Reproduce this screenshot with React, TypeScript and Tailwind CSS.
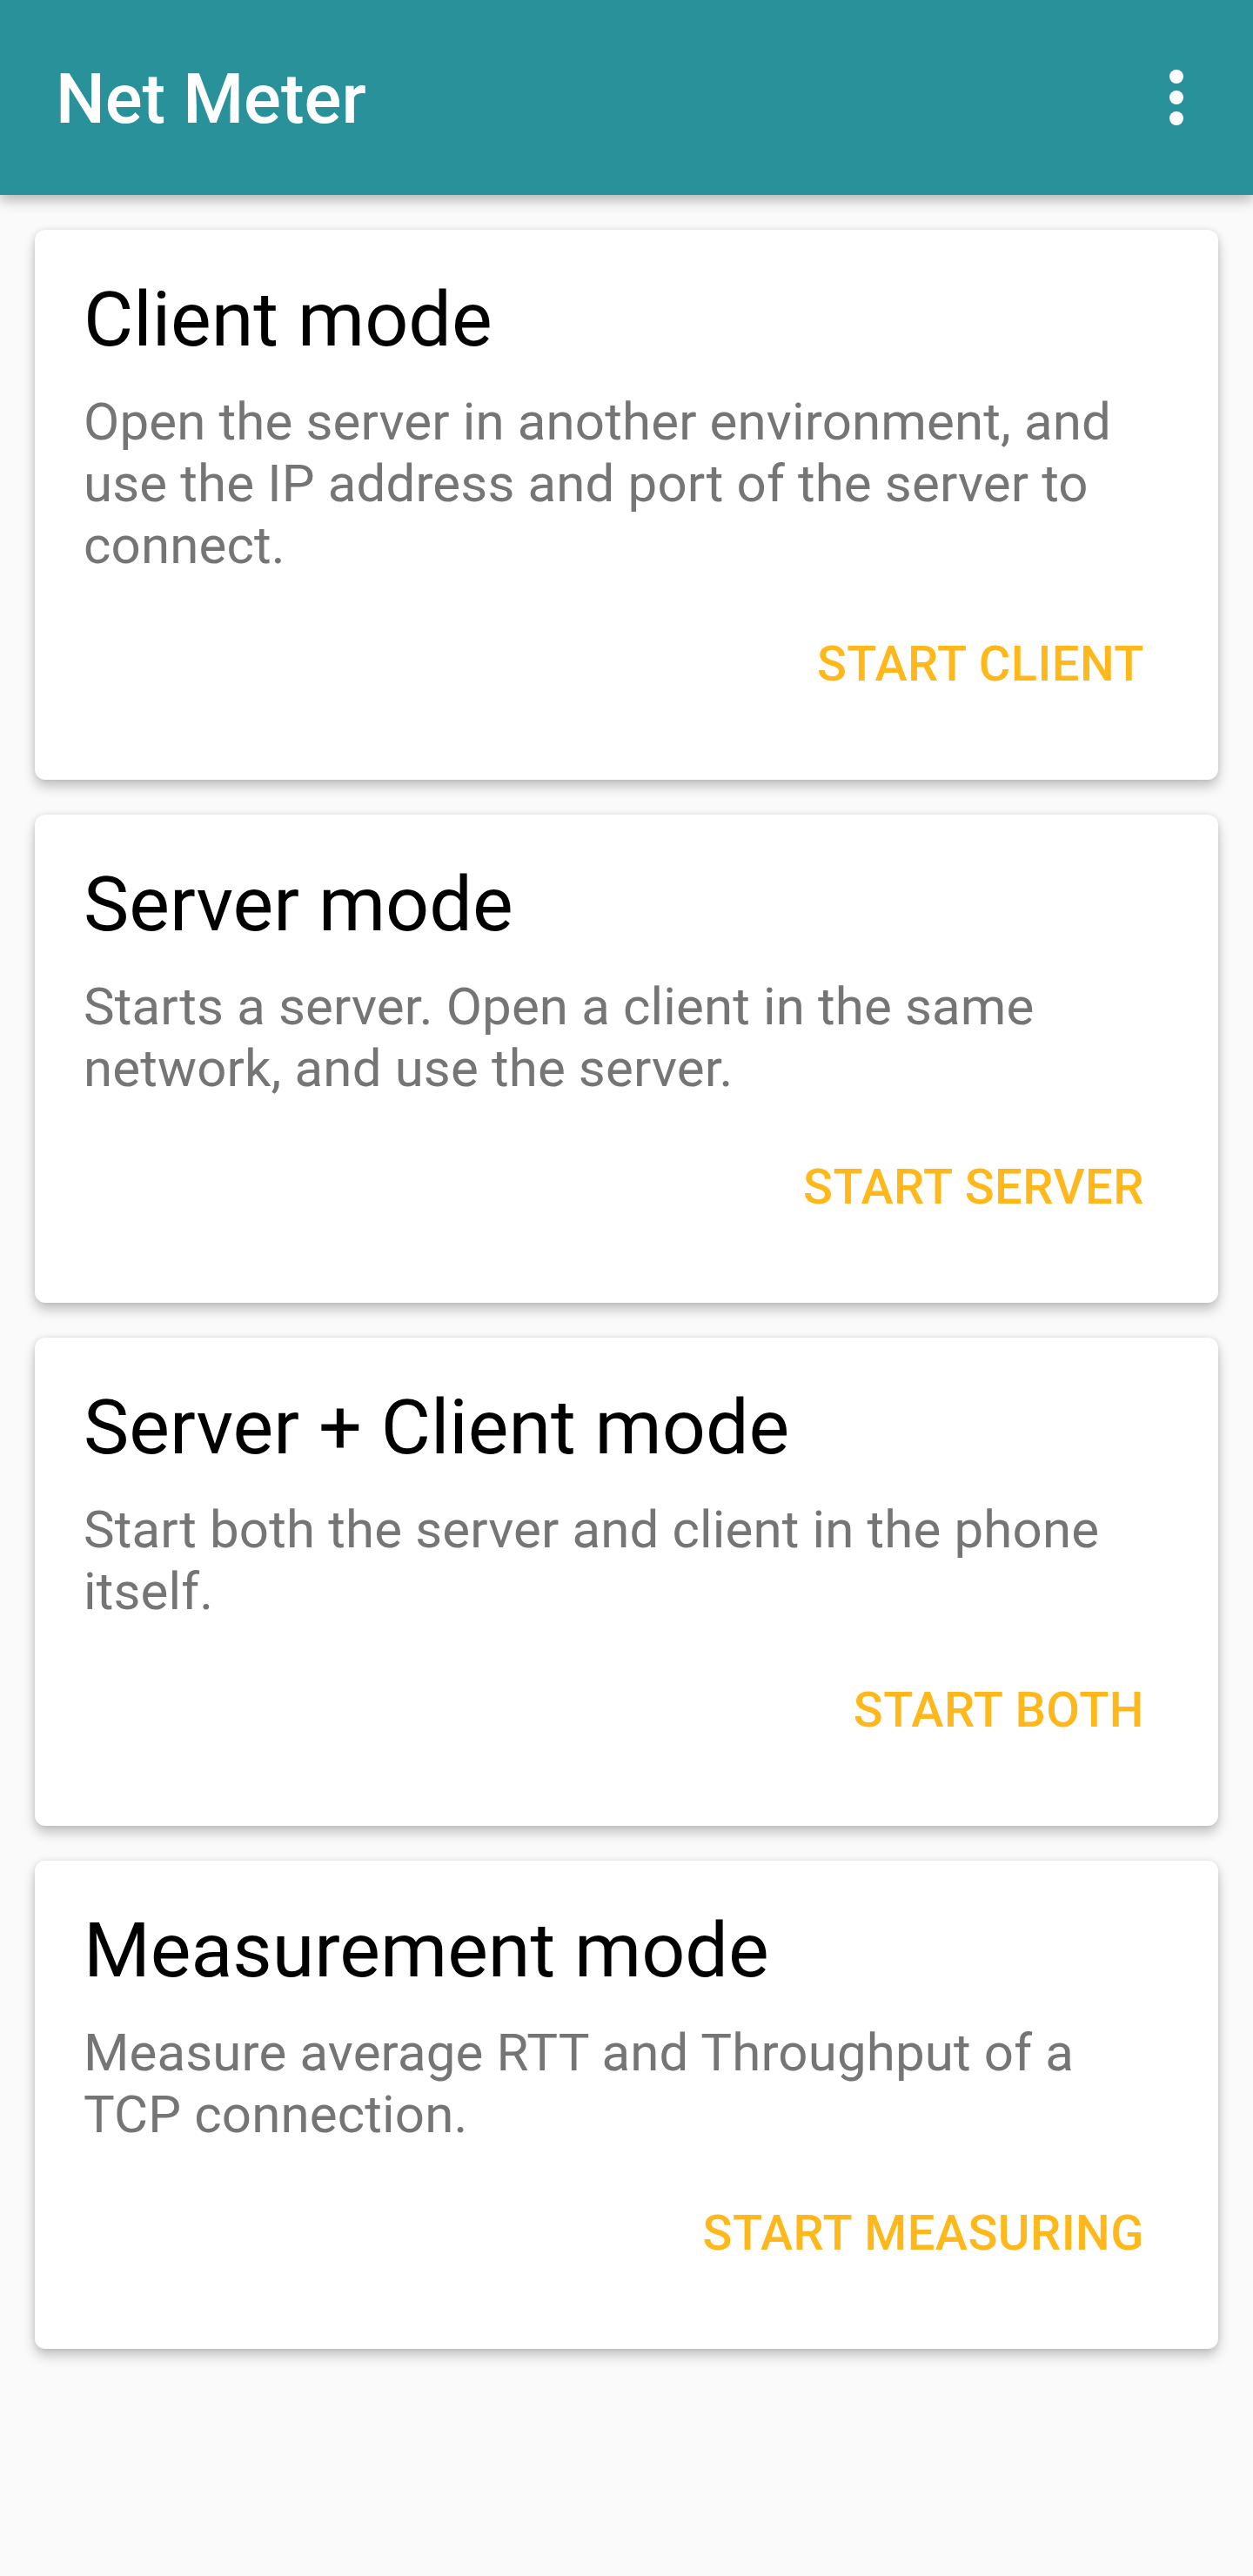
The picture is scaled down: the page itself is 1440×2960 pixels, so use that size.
const modes = [
  {
    title: "Client mode",
    text: "Open the server in another environment, and use the IP address and port of the server to connect.",
    action: "START CLIENT",
  },
  {
    title: "Server mode",
    text: "Starts a server. Open a client in the same network, and use the server.",
    action: "START SERVER",
  },
  {
    title: "Server + Client mode",
    text: "Start both the server and client in the phone itself.",
    action: "START BOTH",
  },
  {
    title: "Measurement mode",
    text: "Measure average RTT and Throughput of a TCP connection.",
    action: "START MEASURING",
  },
];

const MoreIcon = () => (
  <svg width="96" height="96" viewBox="0 0 24 24" fill="#ffffff">
    <circle cx="12" cy="6" r="2" />
    <circle cx="12" cy="12" r="2" />
    <circle cx="12" cy="18" r="2" />
  </svg>
);

const App = () => {
  return (
    <div
      className="min-h-[2960px] w-[1440px] bg-[#fafafa]"
      style={{ fontFamily: "Roboto, 'Liberation Sans', sans-serif" }}
    >
      {/* app bar */}
      <header className="relative z-10 h-[224px] bg-[#29919a] flex items-center justify-between pl-[64px] pr-[40px] shadow-[0_6px_14px_rgba(0,0,0,0.28)]">
        <h1 className="text-[80px] leading-[96px] font-medium text-white mt-[4px]">
          Net Meter
        </h1>
        <button className="w-[96px] h-[96px] flex items-center justify-center">
          <MoreIcon />
        </button>
      </header>

      {/* cards */}
      <main className="flex flex-col gap-[40px] px-[40px] pt-[40px]">
        {modes.map((mode) => (
          <div
            key={mode.title}
            className="bg-white rounded-[12px] pt-[51px] pb-[101px] px-[56px] shadow-[0_8px_14px_rgba(0,0,0,0.22),0_0_6px_rgba(0,0,0,0.1)]"
          >
            <h2 className="text-[88px] leading-[104px] text-black">
              {mode.title}
            </h2>
            <p className="mt-[30px] text-[60px] leading-[71px] tracking-[0.14px] text-[#757575]">
              {mode.text}
            </p>
            <div className="mt-[69px] flex justify-end">
              <button className="mr-[29px] text-[56px] leading-[64px] font-medium tracking-[0.5px] text-[#ffb81c]">
                {mode.action}
              </button>
            </div>
          </div>
        ))}
      </main>
    </div>
  );
};

export default App;
